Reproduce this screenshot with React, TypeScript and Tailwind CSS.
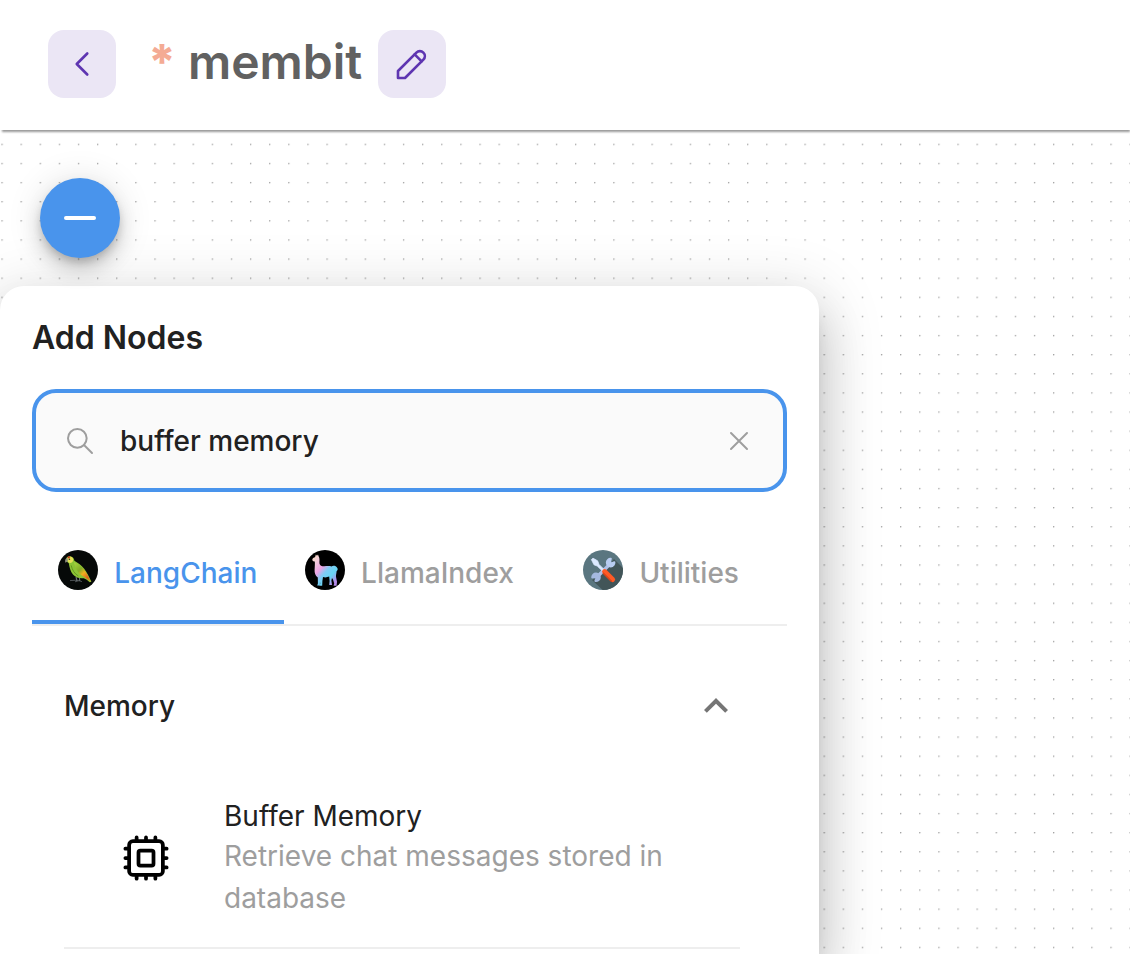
import { useState } from "react";
import type { ReactNode } from "react";
import clsx from "clsx";

function StrokeIcon({ className, children }: { className: string; children: ReactNode }) {
  return (
    <svg
      viewBox="0 0 24 24"
      className={className}
      fill="none"
      stroke="currentColor"
      strokeWidth="1.5"
      strokeLinecap="round"
      strokeLinejoin="round"
      aria-hidden="true"
    >
      {children}
    </svg>
  );
}

function DotGrid() {
  return (
    <svg className="absolute inset-0 h-full w-full" aria-hidden="true">
      <pattern id="dots" x="1.4" y="13.7" width="19.12" height="19.12" patternUnits="userSpaceOnUse">
        <circle cx="0.7" cy="0.7" r="0.7" fill="#8c8c8c" />
      </pattern>
      <rect width="100%" height="100%" fill="url(#dots)" />
    </svg>
  );
}

function ParrotIcon() {
  return (
    <svg viewBox="0 0 40 40" className="mb-1.5 size-10 shrink-0" aria-hidden="true">
      <defs>
        <linearGradient id="wing" x1="14" y1="12" x2="33" y2="32" gradientUnits="userSpaceOnUse">
          <stop offset="0.1" stopColor="#a5d13e" />
          <stop offset="0.4" stopColor="#83ad28" />
          <stop offset="0.58" stopColor="#f0b020" />
          <stop offset="0.8" stopColor="#e2621b" />
          <stop offset="1" stopColor="#c9a52a" />
        </linearGradient>
      </defs>
      <circle cx="20" cy="20" r="20" fill="#060908" />
      <path d="M12 30.6L19 30.2L24 31.6M17 31.8L21 30.6" stroke="#4a4f52" strokeWidth="1" fill="none" />
      <path d="M18 27L19 31M21.4 27.5L21.8 31" stroke="#70777a" strokeWidth="1.1" />
      <path d="M8.2 8.6C9 6.6 11 5.8 13 6.4C15.2 7 16 8.6 16.4 10.8C20 12.8 23.8 15.6 26.2 18.8C28.8 22 31 26.8 33.4 31.8L31.8 32.2C29.6 30.2 28 29 25.8 28.2C22 28.8 18 27.8 15.2 24.8C12.4 21.6 11.4 17 10.8 13.2L8.6 11.4Z" fill="#8cc435" />
      <path d="M16 12.2C20.6 13.8 24.8 17.4 27.2 21.2C29.4 24.4 31.2 28.6 33 31.8C29.8 29.8 27.6 27.6 24.8 26C20.4 23.4 17 18.6 16 12.2Z" fill="url(#wing)" />
      <path d="M13.2 15.4C14.2 20 16.4 23.6 20.4 26" stroke="#5d8a1c" strokeWidth="0.8" fill="none" />
      <path d="M8.8 8.4C9.8 6.4 12.2 6 13.8 7C15.4 8.2 15.6 10.4 14.4 12C13 13.4 11 13.4 10.2 12Z" fill="#e5df55" />
      <path d="M9.4 7.2C10.4 6 12 6.2 12.4 7L10.6 8.6Z" fill="#c92f1c" />
      <path d="M9.6 8C7.2 8.2 6.6 10.2 7.4 12.8L9.8 11.2Z" fill="#8f8d80" />
      <circle cx="11.4" cy="9.3" r="0.8" fill="#30331a" />
    </svg>
  );
}

function LlamaIcon() {
  return (
    <svg viewBox="0 0 40 40" className="mb-1.5 size-10 shrink-0" aria-hidden="true">
      <defs>
        <linearGradient id="fleece" x1="8" y1="6" x2="33" y2="28" gradientUnits="userSpaceOnUse">
          <stop offset="0" stopColor="#f8dfc4" />
          <stop offset="0.2" stopColor="#f3c9dc" />
          <stop offset="0.42" stopColor="#eda3e4" />
          <stop offset="0.6" stopColor="#7fcbf4" />
          <stop offset="0.8" stopColor="#67d5f4" />
          <stop offset="1" stopColor="#b58ae8" />
        </linearGradient>
      </defs>
      <circle cx="20" cy="20" r="20" fill="#000" />
      <path
        d="M7.3 9.4C7.4 8.2 8.8 7.6 10 7.2L10.9 4.4L12 5.8L13 4.4L13.8 6.8C14.6 8 14.6 10 14.4 12C14.2 14.2 15.2 15.8 17.4 16.2C20.4 16.6 23.6 15.6 26.4 16.4C28 15.4 30.4 15.6 31.6 17C33.2 18.6 33 20.2 31.6 21.2C31.4 24 30.6 25.6 31.2 27.8L32 31.8L31.6 35.8H28.6L29.2 33.4L28 29.4L27 28L26.4 30.4L27 35H24.2L24.6 31L24.2 26.6C21.8 27.6 19.8 27.6 18 27L17.4 31L17.2 35.8H14.6L15.2 33.8L15 31.4L14.8 35.6H12.2L12.9 33.6L12.8 27.6C10.2 25.8 9.4 22.6 9.6 19.8C9.8 17 10 13.6 9.8 11.6C8.6 11.4 7.2 10.8 7.3 9.4Z"
        fill="url(#fleece)"
      />
    </svg>
  );
}

function ToolsIcon() {
  return (
    <svg viewBox="0 0 40 40" className="mb-1.5 size-10 shrink-0" aria-hidden="true">
      <clipPath id="badge">
        <circle cx="20" cy="20" r="20" />
      </clipPath>
      <g clipPath="url(#badge)">
        <rect width="40" height="40" fill="#5a7680" />
        <path d="M31 9L44 22V44H24L9 30L16 26L22 20Z" fill="#425558" />
        <path d="M14.5 26.5L26.5 14.5" stroke="#aebfe6" strokeWidth="3.4" />
        <path d="M31.4 12.2A3.8 3.8 0 1 1 27.8 8.8L27 12L28.4 13.4Z" fill="#b8ccf0" stroke="#b8ccf0" strokeWidth="2" strokeLinejoin="round" />
        <path d="M9.2 27.4A3.8 3.8 0 1 1 12.4 31L13.2 28.2L12 27Z" fill="#a5b9e0" stroke="#a5b9e0" strokeWidth="2" strokeLinejoin="round" />
        <path d="M8.4 9.6L10 8.2L14.6 10.8L16 14.4L21 19.4L19.4 21L14.2 16L11 14.8Z" fill="#dce9ff" stroke="#dce9ff" strokeWidth="0.8" strokeLinejoin="round" />
        <path d="M21.6 21.6L29.6 29.6" stroke="#ff5a25" strokeWidth="5" strokeLinecap="round" />
        <path d="M20.4 23.2L28.4 31.2" stroke="#d9441a" strokeWidth="1.6" strokeLinecap="round" />
      </g>
    </svg>
  );
}

function ChipIcon() {
  return (
    <svg
      viewBox="0 0 32 32"
      className="size-15 shrink-0"
      fill="none"
      stroke="#000"
      strokeWidth="2"
      strokeLinecap="round"
      strokeLinejoin="round"
      aria-hidden="true"
    >
      <rect x="7" y="7" width="18" height="18" rx="2" />
      <rect x="12" y="12" width="8" height="8" rx="1" />
      <path d="M11 7V5M16 7V5M21 7V5M11 27V25M16 27V25M21 27V25M7 11H5M7 16H5M7 21H5M27 11H25M27 16H25M27 21H25" />
    </svg>
  );
}

const tabs = [
  { label: "LangChain", icon: <ParrotIcon /> },
  { label: "LlamaIndex", icon: <LlamaIcon /> },
  { label: "Utilities", icon: <ToolsIcon /> },
];

function Header() {
  return (
    <header className="relative z-20 flex h-[130px] shrink-0 items-start bg-white px-12 pt-[30px] shadow-[1px_3px_2px_-1px_rgba(0,0,0,0.4)]">
      <button
        type="button"
        aria-label="Back"
        className="flex size-[68px] items-center justify-center rounded-2xl bg-[#ebe6f5] text-[#5e35b1]"
      >
        <StrokeIcon className="size-[42px]">
          <path d="M15 6l-6 6l6 6" />
        </StrokeIcon>
      </button>
      <h1 className="ml-8 flex gap-3 text-5xl leading-16 font-semibold text-[#616161]">
        <span className="font-extrabold text-[#f4ab94]">*</span>
        <span>membit</span>
      </h1>
      <button
        type="button"
        aria-label="Edit name"
        className="ml-4 flex size-[68px] items-center justify-center rounded-2xl bg-[#ebe6f5] text-[#5e35b1]"
      >
        <StrokeIcon className="size-[42px]">
          <path d="M4 20h4l10.5 -10.5a1.5 1.5 0 0 0 -4 -4l-10.5 10.5v4" />
          <path d="M13.5 6.5l4 4" />
        </StrokeIcon>
      </button>
    </header>
  );
}

function AddNodesPanel() {
  const [query, setQuery] = useState("buffer memory");
  const [active, setActive] = useState("LangChain");
  const [open, setOpen] = useState(true);

  return (
    <section className="w-[819px] max-w-full flex-1 rounded-t-3xl bg-white px-8 pt-8 shadow-[0_16px_20px_-10px_rgba(0,0,0,0.2),0_32px_48px_4px_rgba(0,0,0,0.14),0_12px_60px_10px_rgba(0,0,0,0.12)]">
      <h2 className="text-[32px] leading-10 font-semibold text-[#212121]">Add Nodes</h2>

      <div className="mt-[31px] flex h-[103px] items-center gap-6 rounded-3xl border-4 border-[#4994ec] bg-[#fafafa] px-7 text-[#9e9e9e]">
        <StrokeIcon className="size-8 shrink-0">
          <circle cx="10" cy="10" r="7" />
          <path d="M21 21l-6 -6" />
        </StrokeIcon>
        <input
          type="text"
          aria-label="Search nodes"
          value={query}
          onChange={(e) => setQuery(e.target.value)}
          className="min-w-0 flex-1 bg-transparent text-[28px] font-medium text-[#212121] outline-none"
        />
        <button type="button" aria-label="Clear search" onClick={() => setQuery("")} className="shrink-0">
          <StrokeIcon className="size-8">
            <path d="M18 6l-12 12M6 6l12 12" />
          </StrokeIcon>
        </button>
      </div>

      <div role="tablist" className="mt-[30px] grid grid-cols-3 border-b-2 border-[#eeeeee]">
        {tabs.map((tab) => (
          <button
            key={tab.label}
            type="button"
            role="tab"
            aria-selected={active === tab.label}
            onClick={() => setActive(tab.label)}
            className={clsx(
              "flex h-[102px] items-center justify-center gap-4 border-b-4 pt-1 text-[28px] font-medium",
              active === tab.label ? "border-[#4994ec] text-[#4994ec]" : "border-transparent text-[#9e9e9e]"
            )}
          >
            {tab.icon}
            {tab.label}
          </button>
        ))}
      </div>

      <div className="pt-12 pr-[47px] pl-8">
        <button
          type="button"
          aria-expanded={open}
          onClick={() => setOpen(!open)}
          className="flex h-16 w-full items-center justify-between text-[28px] font-medium text-[#212121]"
        >
          Memory
          <svg
            viewBox="0 0 24 24"
            className={clsx("size-12", open && "rotate-180")}
            fill="#757575"
            aria-hidden="true"
          >
            <path d="M16.59 8.59 12 13.17 7.41 8.59 6 10l6 6 6-6z" />
          </svg>
        </button>
        {open && (
          <ul className="mt-8 border-b-2 border-[#eeeeee]">
            <li className="flex items-center pt-[27px] pb-7">
              <div className="mr-12 ml-[52px] flex shrink-0">
                <ChipIcon />
              </div>
              <div className="min-w-0 text-[28px]">
                <p className="leading-[38px] text-[#212121]">Buffer Memory</p>
                <p className="leading-[42px] text-[#9e9e9e]">Retrieve chat messages stored in database</p>
              </div>
            </li>
          </ul>
        )}
      </div>
    </section>
  );
}

export default function App() {
  return (
    <div className="flex h-screen flex-col overflow-hidden bg-white font-['Inter',sans-serif]">
      <Header />
      <main className="relative flex-1 overflow-hidden">
        <DotGrid />
        <div className="relative flex h-full flex-col pt-12">
          <button
            type="button"
            aria-label="Close node list"
            className="relative z-10 mb-7 ml-10 flex size-20 shrink-0 items-center justify-center rounded-full bg-[#4994ec] shadow-[0_6px_10px_-2px_rgba(0,0,0,0.2),0_12px_20px_0_rgba(0,0,0,0.14),0_2px_36px_0_rgba(0,0,0,0.12)]"
          >
            <span className="h-1 w-8 rounded-sm bg-white" />
          </button>
          <AddNodesPanel />
        </div>
      </main>
    </div>
  );
}
